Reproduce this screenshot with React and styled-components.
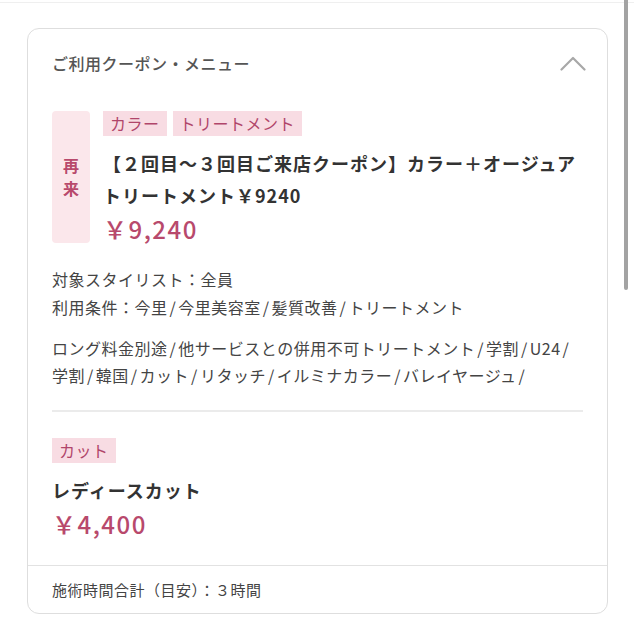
import React from 'react';
import styled, { createGlobalStyle } from 'styled-components';

const GlobalStyle = createGlobalStyle`
  html, body {
    margin: 0;
    padding: 0;
    background: #ffffff;
  }
  body {
    font-family: "Noto Sans CJK JP", "Noto Sans", sans-serif;
    color: #444444;
  }
`;

const coupons = [
  {
    badge: ['再', '来'],
    tags: ['カラー', 'トリートメント'],
    title: '【２回目〜３回目ご来店クーポン】カラー＋オージュアトリートメント￥9240',
    price: '￥9,240',
  },
];

const conditions = [
  '対象スタイリスト：全員',
  '利用条件：今里/今里美容室/髪質改善/トリートメント',
];

const note =
  'ロング料金別途/他サービスとの併用不可トリートメント/学割/U24/学割/韓国/カット/リタッチ/イルミナカラー/バレイヤージュ/';

function withSlashes(text) {
  const parts = text.split('/');
  return parts.map((p, i) => (
    <React.Fragment key={i}>
      {p}
      {i < parts.length - 1 && <Sep>/</Sep>}
    </React.Fragment>
  ));
}

export default function App() {
  return (
    <Screen>
      <GlobalStyle />
      <TopLine />
      <Page>
        <Card>
          <Header>
            <HeaderTitle>ご利用クーポン・メニュー</HeaderTitle>
            <svg width="26" height="15" viewBox="0 0 26 15">
              <polyline
                points="1.5,13.5 13,2 24.5,13.5"
                fill="none"
                stroke="#a8a8a8"
                strokeWidth="2.2"
                strokeLinecap="round"
                strokeLinejoin="round"
              />
            </svg>
          </Header>
          <Body>
            {coupons.map((c) => (
              <Coupon key={c.title}>
                <Badge>
                  {c.badge.map((b) => (
                    <span key={b}>{b}</span>
                  ))}
                </Badge>
                <Main>
                  <Tags>
                    {c.tags.map((t) => (
                      <Tag key={t}>{t}</Tag>
                    ))}
                  </Tags>
                  <Title>{c.title}</Title>
                  <Price>{c.price}</Price>
                </Main>
              </Coupon>
            ))}
            <Conditions>
              {conditions.map((line) => (
                <div key={line}>{withSlashes(line)}</div>
              ))}
            </Conditions>
            <Note>{withSlashes(note)}</Note>
            <Divider />
            <Menu>
              <Tags>
                <Tag>カット</Tag>
              </Tags>
              <Title>レディースカット</Title>
              <Price>￥4,400</Price>
            </Menu>
          </Body>
          <Footer>施術時間合計（目安）：３時間</Footer>
        </Card>
      </Page>
      <ScrollThumb />
    </Screen>
  );
}

const Screen = styled.div`
  position: relative;
  width: 634px;
  height: 630px;
  overflow: hidden;
`;

const TopLine = styled.div`
  height: 2px;
  border-bottom: 1px solid #efefef;
`;

const ScrollThumb = styled.div`
  position: absolute;
  top: 0;
  left: 624px;
  z-index: 10;
  width: 4px;
  height: 290px;
  background: #a3a3a3;
  border-radius: 0 0 2px 2px;
`;

const Page = styled.div`
  padding: 25px 26px 16px 27px;
`;

const Card = styled.div`
  border: 1px solid #dedede;
  border-radius: 12px;
  overflow: hidden;
  background: #fff;
`;

const Header = styled.div`
  display: flex;
  align-items: center;
  justify-content: space-between;
  height: 68px;
  padding: 0 21px 0 24px;
`;

const HeaderTitle = styled.div`
  font-size: 16px;
  font-weight: 500;
  letter-spacing: 0.5px;
  color: #555555;
`;

const Body = styled.div`
  padding: 14px 24px 27px;
`;

const Coupon = styled.div`
  display: flex;
  gap: 13px;
`;

const Badge = styled.div`
  flex: 0 0 38px;
  display: flex;
  flex-direction: column;
  align-items: center;
  justify-content: center;
  background: #fbe7eb;
  border-radius: 4px;
  color: #b8496c;
  font-size: 16px;
  font-weight: 700;
  line-height: 23px;
`;

const Main = styled.div`
  flex: 1;
  min-width: 0;
  display: flex;
  flex-direction: column;
  align-items: flex-start;
`;

const Tags = styled.div`
  display: flex;
  gap: 6px;
`;

const Tag = styled.span`
  display: inline-block;
  height: 25px;
  line-height: 25px;
  padding: 0 7px;
  background: #f8dce3;
  color: #b0456a;
  font-size: 16px;
  letter-spacing: 0.5px;
`;

const Title = styled.div`
  margin-top: 11px;
  font-size: 18px;
  font-weight: 700;
  letter-spacing: 1px;
  line-height: 32px;
  color: #333333;
`;

const Price = styled.div`
  margin-top: 4px;
  font-size: 24px;
  font-weight: 500;
  letter-spacing: 1.5px;
  line-height: 28px;
  color: #b8496c;
`;

const Conditions = styled.div`
  margin-top: 22px;
  font-size: 16px;
  letter-spacing: 0.5px;
  line-height: 28px;
  color: #444444;
`;

const Note = styled.div`
  margin-top: 14px;
  font-size: 16px;
  letter-spacing: 0.5px;
  line-height: 27px;
  color: #444444;
`;

const Sep = styled.span`
  padding: 0 2px;
`;

const Divider = styled.div`
  margin-top: 21px;
  height: 2px;
  background: #ebebeb;
`;

const Menu = styled.div`
  margin-top: 26px;
  display: flex;
  flex-direction: column;
  align-items: flex-start;
`;

const Footer = styled.div`
  display: flex;
  align-items: center;
  height: 47px;
  padding: 0 24px;
  border-top: 1px solid #e2e2e2;
  font-size: 15px;
  letter-spacing: 0.5px;
  color: #444444;
`;
